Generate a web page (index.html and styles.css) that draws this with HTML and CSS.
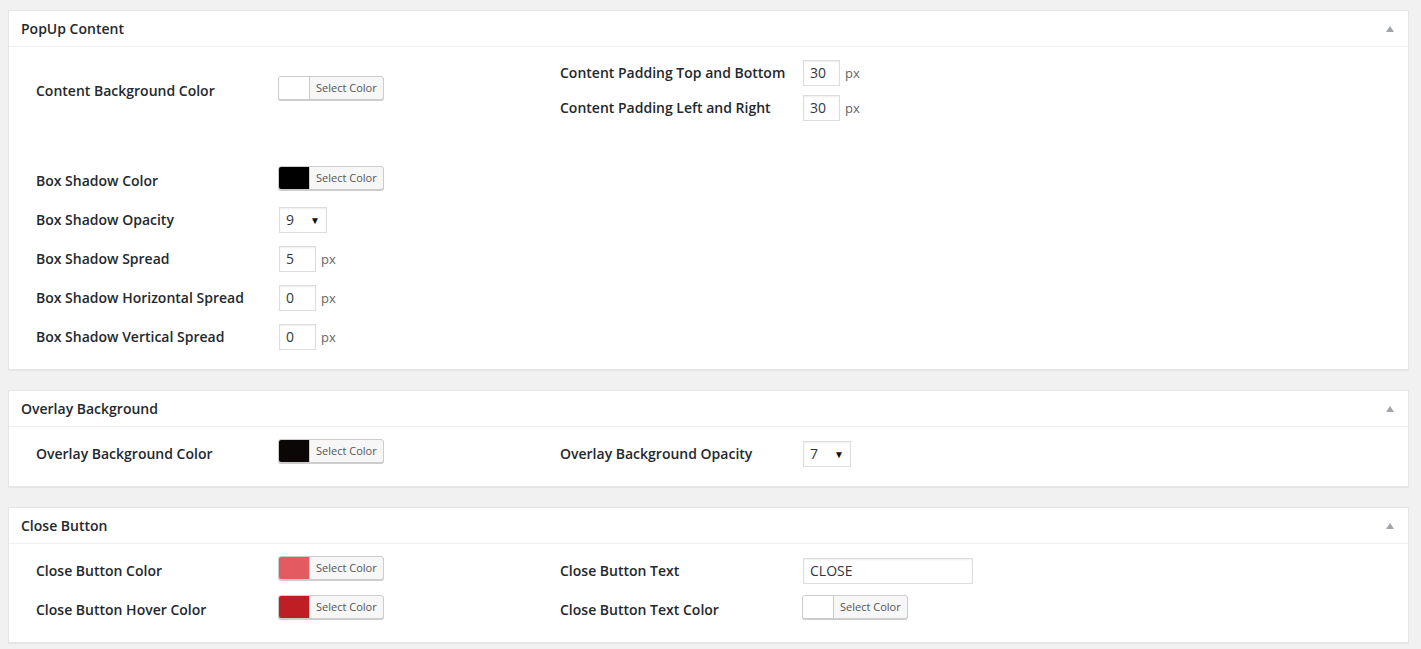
FILE: index.html
```html
<!DOCTYPE html>
<html lang="en">
<head>
    <meta charset="UTF-8">
    <meta name="viewport" content="width=device-width, initial-scale=1.0">
    <title>PopUp Settings</title>
    <link rel="stylesheet" href="styles.css">
</head>
<body>
    <!-- PopUp Content -->
    <div class="postbox">
        <div class="postbox-head">
            <h2>PopUp Content</h2>
            <span class="toggle"></span>
        </div>
        <div class="postbox-body">
            <div class="col col-left">
                <div class="row row-first">
                    <label>Content Background Color</label>
                    <div class="color-picker"><span class="swatch swatch-white"></span><span class="picker-text">Select Color</span></div>
                </div>
                <div class="row">
                    <label>Box Shadow Color</label>
                    <div class="color-picker"><span class="swatch swatch-black"></span><span class="picker-text">Select Color</span></div>
                </div>
                <div class="row">
                    <label>Box Shadow Opacity</label>
                    <div class="select">9<span class="arrow">&#9660;</span></div>
                </div>
                <div class="row">
                    <label>Box Shadow Spread</label>
                    <input class="num" type="text" value="5"><span class="unit">px</span>
                </div>
                <div class="row">
                    <label>Box Shadow Horizontal Spread</label>
                    <input class="num" type="text" value="0"><span class="unit">px</span>
                </div>
                <div class="row">
                    <label>Box Shadow Vertical Spread</label>
                    <input class="num" type="text" value="0"><span class="unit">px</span>
                </div>
            </div>
            <div class="col col-right">
                <div class="row row-short">
                    <label>Content Padding Top and Bottom</label>
                    <input class="num" type="text" value="30"><span class="unit">px</span>
                </div>
                <div class="row row-short">
                    <label>Content Padding Left and Right</label>
                    <input class="num" type="text" value="30"><span class="unit">px</span>
                </div>
            </div>
        </div>
    </div>

    <!-- Overlay Background -->
    <div class="postbox">
        <div class="postbox-head">
            <h2>Overlay Background</h2>
            <span class="toggle"></span>
        </div>
        <div class="postbox-body">
            <div class="col">
                <div class="row">
                    <label>Overlay Background Color</label>
                    <div class="color-picker"><span class="swatch swatch-overlay"></span><span class="picker-text">Select Color</span></div>
                </div>
            </div>
            <div class="col">
                <div class="row">
                    <label>Overlay Background Opacity</label>
                    <div class="select">7<span class="arrow">&#9660;</span></div>
                </div>
            </div>
        </div>
    </div>

    <!-- Close Button -->
    <div class="postbox">
        <div class="postbox-head">
            <h2>Close Button</h2>
            <span class="toggle"></span>
        </div>
        <div class="postbox-body">
            <div class="col">
                <div class="row">
                    <label>Close Button Color</label>
                    <div class="color-picker"><span class="swatch swatch-red"></span><span class="picker-text">Select Color</span></div>
                </div>
                <div class="row">
                    <label>Close Button Hover Color</label>
                    <div class="color-picker"><span class="swatch swatch-darkred"></span><span class="picker-text">Select Color</span></div>
                </div>
            </div>
            <div class="col">
                <div class="row">
                    <label>Close Button Text</label>
                    <input class="text" type="text" value="CLOSE">
                </div>
                <div class="row">
                    <label>Close Button Text Color</label>
                    <div class="color-picker"><span class="swatch swatch-white"></span><span class="picker-text">Select Color</span></div>
                </div>
            </div>
        </div>
    </div>
</body>
</html>
```

FILE: styles.css
```css
body {
    margin: 10px 12px 8px 8px;
    background: #f1f1f1;
    font-family: "Open Sans", sans-serif;
    font-size: 14px;
    color: #23282d;
}
.postbox {
    background: #fff;
    border: 1px solid #e5e5e5;
    box-shadow: 0 1px 1px rgba(0, 0, 0, 0.04);
    margin-bottom: 20px;
}
.postbox-head {
    height: 35px;
    border-bottom: 1px solid #eee;
    display: flex;
    align-items: center;
    justify-content: space-between;
    padding: 0 14px 0 12px;
}
.postbox-head h2 {
    margin: 0;
    font-size: 14px;
    font-weight: 600;
}
.toggle {
    width: 0;
    height: 0;
    border-left: 4px solid transparent;
    border-right: 4px solid transparent;
    border-bottom: 6px solid #a0a5aa;
}
.postbox-body {
    display: grid;
    grid-template-columns: 524px 1fr;
    padding: 7px 27px 13px;
}
.row {
    display: flex;
    align-items: center;
    height: 39px;
}
.row label {
    width: 242px;
    flex: none;
    font-weight: 600;
}
.row-first {
    margin-top: 17px;
    margin-bottom: 51px;
}
.col-right {
    padding-top: 1px;
}
.row-short {
    height: 35px;
}
.color-picker {
    display: flex;
    height: 22px;
    margin-bottom: 6px;
    border: 1px solid #ccc;
    border-radius: 3px;
    box-shadow: 0 1px 0 #ccc;
    background: #f7f7f7;
    overflow: hidden;
}
.swatch {
    width: 30px;
    border-right: 1px solid #ccc;
}
.swatch-white { background: #fff; }
.swatch-black { background: #000; }
.swatch-overlay { background: #0c0707; }
.swatch-red { background: #e35b61; }
.swatch-darkred { background: #be1e24; }
.picker-text {
    padding: 0 6px;
    font-size: 11px;
    line-height: 22px;
    color: #555;
}
.num,
.text,
.select {
    box-sizing: border-box;
    height: 26px;
    margin: 0 0 0 1px;
    border: 1px solid #ddd;
    box-shadow: inset 0 1px 2px rgba(0, 0, 0, 0.07);
    padding: 0 6px;
    font-family: "Open Sans", sans-serif;
    font-size: 14px;
    color: #32373c;
    background: #fff;
    outline: none;
}
.num {
    width: 37px;
}
.text {
    width: 170px;
}
.select {
    width: 48px;
    display: flex;
    align-items: center;
    justify-content: space-between;
}
.arrow {
    font-size: 10px;
    color: #111;
}
.unit {
    margin-left: 5px;
    font-size: 13px;
    color: #666;
}
```
